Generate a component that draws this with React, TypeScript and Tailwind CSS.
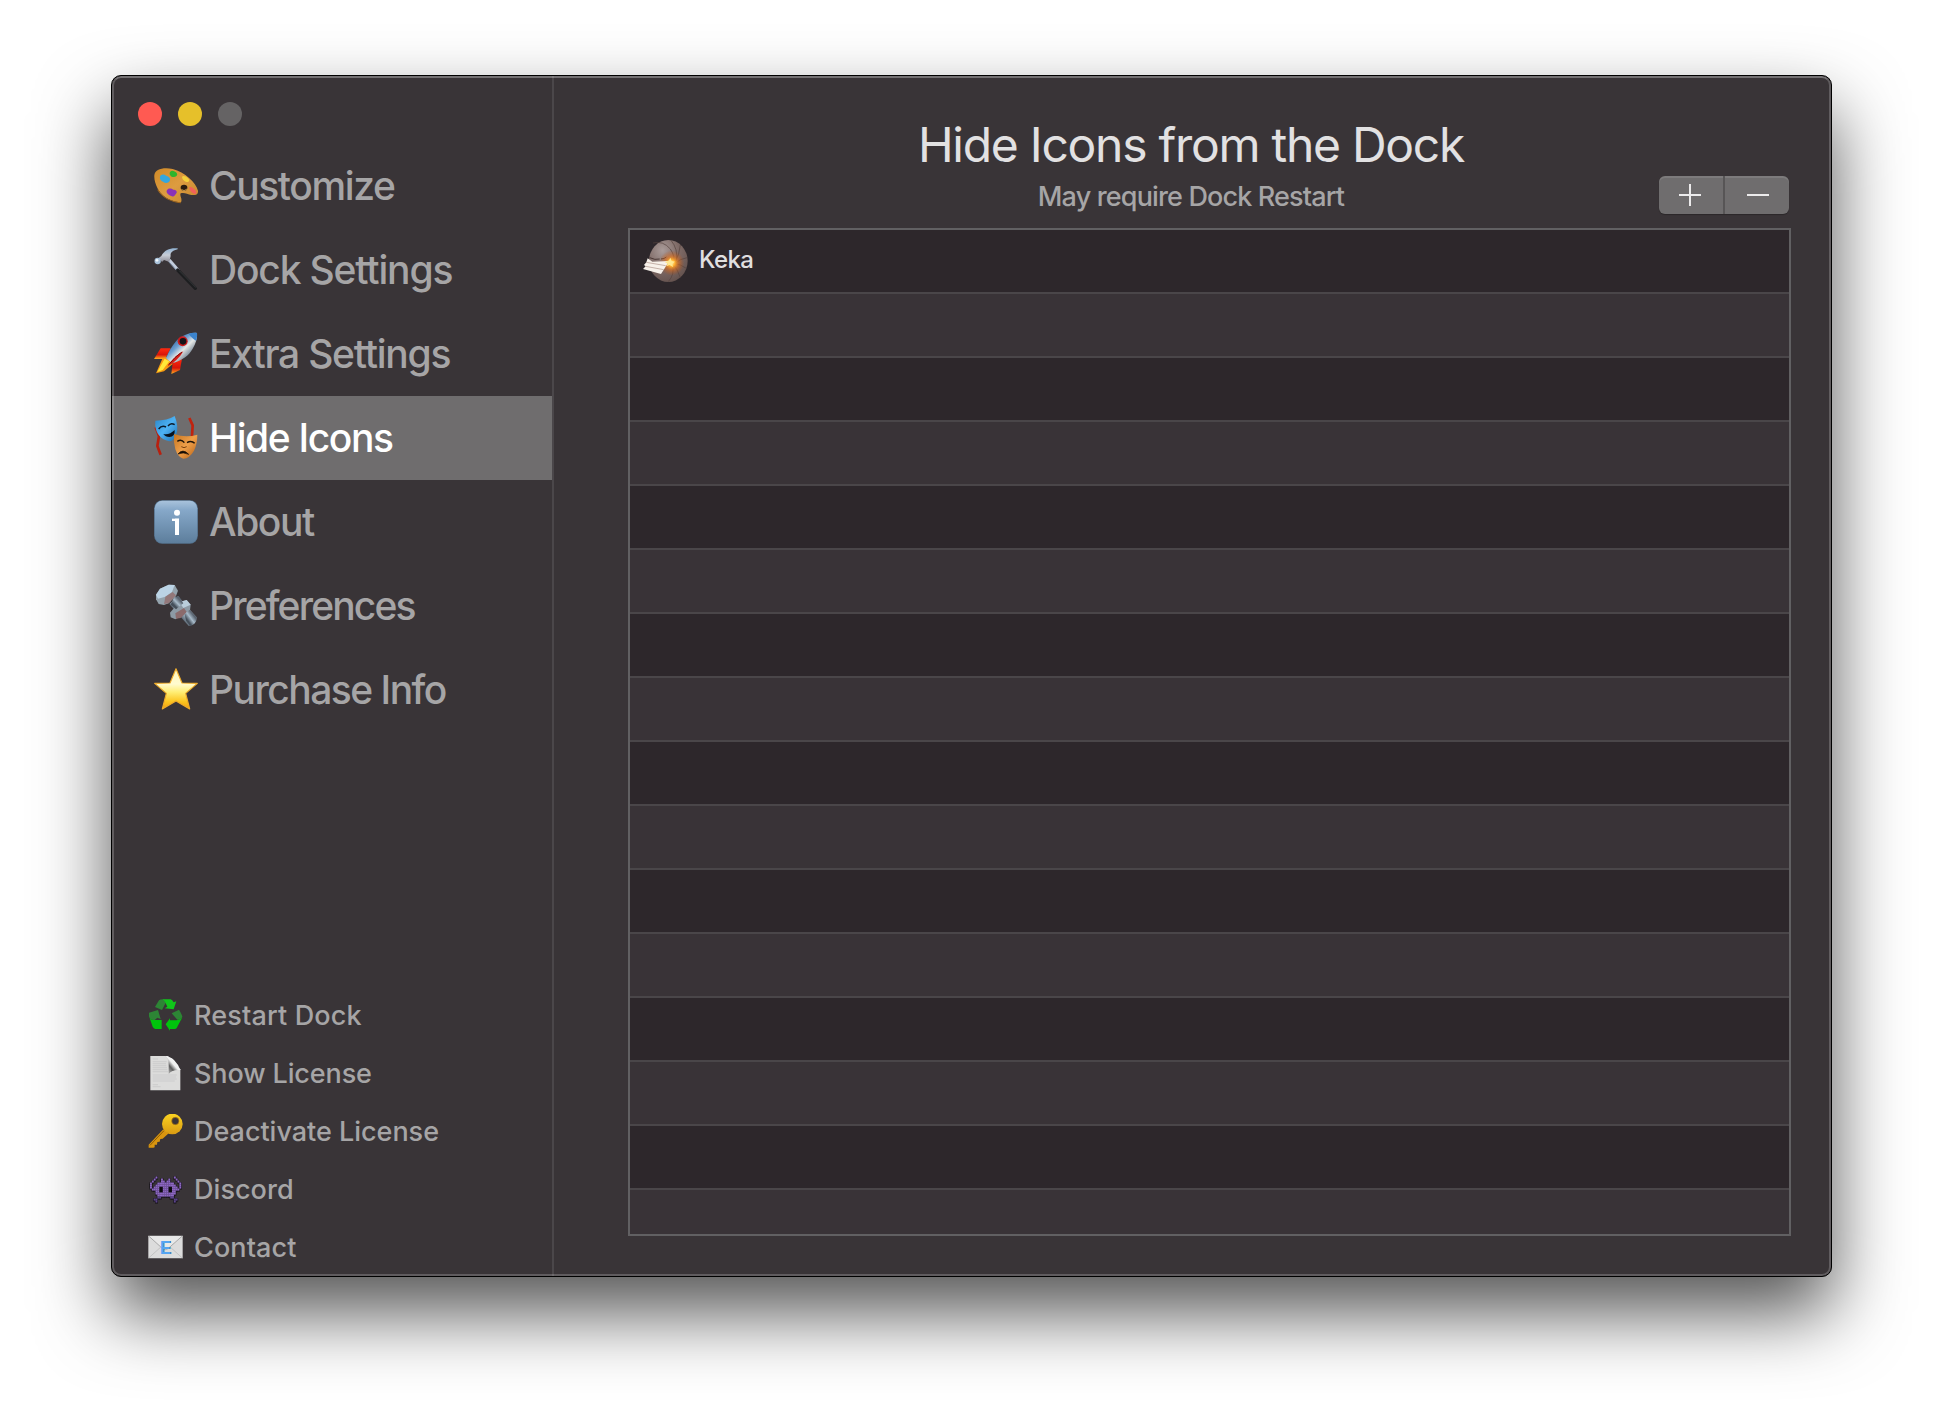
import React from "react";

function Palette() {
  return (
    <svg viewBox="0 0 132 132" className="size-[44px] shrink-0">
      <defs>
        <linearGradient id="pal" x1="0" y1="0" x2="1" y2="1">
          <stop offset="0" stopColor="#d08a28" />
          <stop offset="0.5" stopColor="#dd9c40" />
          <stop offset="1" stopColor="#c5862c" />
        </linearGradient>
      </defs>
      <path d="M1 34C2 16 28 9 56 15C92 24 126 56 132 80C133 92 126 94 112 93C100 90 90 84 80 88C76 96 86 102 81 115C60 114 28 104 12 76C4 60 0 46 1 34Z" fill="url(#pal)" />
      <path d="M12 76C28 104 60 114 81 115L80 118C54 114 26 104 10 78Z" fill="#a5681c" />
      <path d="M48 24c6-7 14-2 20 3c4 6 0 11-8 12c-8 1-16-6-12-15Z" fill="#2fb52b" />
      <path d="M18 38c2-9 14-8 20-2c7 2 13 8 9 15c-6 8-13 7-20 2c-6-3-11-8-9-15Z" fill="#35a7dd" />
      <path d="M84 38c6-4 12 0 17 4c6 5 6 10 1 12c-9 0-18-7-18-16Z" fill="#f3d13c" />
      <path d="M106 70c6-4 12 2 18 8c5 7 4 12-2 12c-8-2-16-10-16-20Z" fill="#f1615a" />
      <path d="M38 80c4-9 14-7 20-3c7 0 12 5 10 9c-4 6-8 14-14 11c-7-3-18-8-16-17Z" fill="#8a32b8" />
      <ellipse cx="90" cy="71" rx="10" ry="8.500" fill="#2a1c10" />
      <path d="M82 76q8 8 17-1" stroke="#e9b45f" strokeWidth="2" fill="none" />
    </svg>
  );
}

function Hammer() {
  return (
    <svg viewBox="0 0 132 132" className="size-[44px] shrink-0">
      <defs>
        <linearGradient id="ham" x1="0" y1="0" x2="0" y2="1">
          <stop offset="0" stopColor="#8fb0d0" />
          <stop offset="0.5" stopColor="#c8cdd6" />
          <stop offset="1" stopColor="#8d8b95" />
        </linearGradient>
      </defs>
      <path d="M46 36L74 68" stroke="#c3cddd" strokeWidth="9" />
      <path d="M43 40L70 70" stroke="#7c8da5" strokeWidth="3" />
      <path d="M71 66L124 121" stroke="#1d1e20" strokeWidth="10" strokeLinecap="round" />
      <path d="M76 68L126 119" stroke="#3b3d40" strokeWidth="2.500" />
      <path d="M71 1C50 -1 32 4 22 24L14 30L24 42L30 36L46 42L50 24C48 14 56 8 71 4Z" fill="url(#ham)" />
      <circle cx="11" cy="39" r="9.500" fill="#a9c2da" />
      <circle cx="9" cy="37" r="4" fill="#f3f8fc" />
    </svg>
  );
}

function Rocket() {
  return (
    <svg viewBox="0 0 132 132" className="size-[44px] shrink-0">
      <defs>
        <linearGradient id="rkt" x1="0.200" y1="0.200" x2="0.800" y2="0.800">
          <stop offset="0" stopColor="#2c5f9e" />
          <stop offset="0.350" stopColor="#6d9fd0" />
          <stop offset="0.600" stopColor="#e6e8e6" />
          <stop offset="1" stopColor="#5d6f84" />
        </linearGradient>
        <linearGradient id="fin" x1="0" y1="0" x2="0" y2="1">
          <stop offset="0" stopColor="#ff2a10" />
          <stop offset="0.600" stopColor="#d81408" />
          <stop offset="1" stopColor="#ffb020" />
        </linearGradient>
      </defs>
      <path d="M50 49L20 49L0 81L34 81Z" fill="url(#fin)" />
      <path d="M56 94L84 80L78 114L52 126Z" fill="url(#fin)" />
      <path d="M26 78L6 124L30 118L56 96L48 74Z" fill="#f89a10" />
      <path d="M32 80L10 120L26 114L46 88Z" fill="#ffe83a" />
      <path d="M129 3C112 0 82 10 66 28C54 42 44 60 36 78C42 86 52 92 60 92C84 84 104 72 116 50C126 34 130 18 129 3Z" fill="url(#rkt)" />
      <path d="M129 3C122 1 112 2 104 6C110 14 118 22 126 26C129 18 130 10 129 3Z" fill="#3b83cc" />
      <path d="M88 58Q66 66 40 104Q72 86 88 58Z" fill="#d61d18" />
      <path d="M84 60Q62 74 44 98" stroke="#7b0d0d" strokeWidth="3" fill="none" />
      <circle cx="86" cy="28" r="15" fill="#ca1b1c" />
      <circle cx="87" cy="28" r="10" fill="#141418" />
    </svg>
  );
}

function Masks() {
  return (
    <svg viewBox="0 0 132 132" className="size-[44px] shrink-0">
      <defs>
        <linearGradient id="mb" x1="0" y1="0" x2="1" y2="1">
          <stop offset="0" stopColor="#2b86c8" />
          <stop offset="0.500" stopColor="#4db2f4" />
          <stop offset="1" stopColor="#1f6dac" />
        </linearGradient>
        <linearGradient id="mo" x1="0" y1="0" x2="1" y2="1">
          <stop offset="0" stopColor="#c4731f" />
          <stop offset="0.500" stopColor="#f0a04a" />
          <stop offset="1" stopColor="#b35f14" />
        </linearGradient>
      </defs>
      <path d="M5 34L15 60L10 90L20 116" stroke="#b8200f" strokeWidth="8" fill="none" strokeLinejoin="round" />
      <path d="M106 6L116 28L114 60" stroke="#c0230f" strokeWidth="8" fill="none" strokeLinejoin="round" />
      <path d="M4 14Q40 14 62 0Q76 34 66 58Q58 76 46 76Q24 72 12 54Q2 38 4 14Z" fill="url(#mb)" />
      <path d="M14 39Q23 27 36 33M42 30Q50 19 62 26" stroke="#0b1a2a" strokeWidth="4.500" fill="none" />
      <path d="M28 54Q46 58 62 42Q64 62 46 63Q34 63 28 54Z" fill="#08131f" />
      <path d="M60 54Q94 66 130 56Q130 84 120 104Q106 128 88 128Q72 124 64 100Q58 80 60 54Z" fill="url(#mo)" />
      <path d="M70 76Q82 68 91 80M99 80Q112 72 122 82" stroke="#1d1208" strokeWidth="4.500" fill="none" />
      <path d="M72 114Q86 96 104 115Q88 107 72 114Z" fill="#150c05" stroke="#150c05" strokeWidth="2" />
      <path d="M82 92Q90 98 98 92" stroke="#7a3f0d" strokeWidth="3" fill="none" />
    </svg>
  );
}

function InfoBadge() {
  return (
    <svg viewBox="0 0 132 132" className="size-[44px] shrink-0">
      <defs>
        <linearGradient id="inf" x1="0" y1="0" x2="0" y2="1">
          <stop offset="0" stopColor="#a9c3dc" />
          <stop offset="0.220" stopColor="#86a8c9" />
          <stop offset="1" stopColor="#5d7e9c" />
        </linearGradient>
      </defs>
      <rect x="0.500" y="0.500" width="131" height="131" rx="24" fill="#547390" />
      <rect x="2" y="2" width="128" height="127" rx="23" fill="url(#inf)" />
      <circle cx="69" cy="38" r="9" fill="#fff" />
      <rect x="54" y="56" width="21" height="7" fill="#fff" />
      <rect x="63" y="56" width="12" height="49" fill="#fff" />
    </svg>
  );
}

function Bolt() {
  return (
    <svg viewBox="0 0 132 132" className="size-[44px] shrink-0">
      <defs>
        <linearGradient id="shaft" x1="0" y1="1" x2="1" y2="0">
          <stop offset="0.300" stopColor="#454f5a" />
          <stop offset="0.500" stopColor="#a9bccb" />
          <stop offset="0.700" stopColor="#59636f" />
        </linearGradient>
      </defs>
      <path d="M46 60L72 36L128 100Q128 122 104 126Z" fill="url(#shaft)" />
      <path d="M76 54L98 48L110 62L108 78L90 92L64 106L50 100L48 86Z" fill="#8d9aa5" />
      <path d="M76 54L98 48L110 62L88 72Z" fill="#b9cddb" />
      <path d="M64 88L90 72L98 84L80 102L66 104Z" fill="#8b6b6c" />
      <path d="M92 90L106 78L128 100Q128 120 108 126L96 110Z" fill="url(#shaft)" />
      <path d="M60 40L74 36L88 58L66 76L50 62Z" fill="url(#shaft)" />
      <path d="M6 32L18 14L44 2L62 3L72 20L66 36L44 58L30 63L14 60L6 46Z" fill="#94a3ad" />
      <path d="M6 32L18 14L44 2L62 3L54 24L34 38L12 44Z" fill="#bcd4e6" />
      <path d="M34 38L56 24L66 34L44 58L30 60Z" fill="#93787a" />
    </svg>
  );
}

function Star() {
  return (
    <svg viewBox="0 0 132 132" className="size-[44px] shrink-0">
      <defs>
        <linearGradient id="st" x1="0" y1="0" x2="0" y2="1">
          <stop offset="0" stopColor="#fff8b8" />
          <stop offset="0.380" stopColor="#fffbd0" />
          <stop offset="0.580" stopColor="#ffee74" />
          <stop offset="0.820" stopColor="#fbc41e" />
          <stop offset="1" stopColor="#f0a010" />
        </linearGradient>
      </defs>
      <path d="M66 2L84 45L130 46L95 76L107 123L66 99L25 123L37 76L2 46L48 45Z" fill="url(#st)" stroke="#eeab2a" strokeWidth="3.500" strokeLinejoin="round" />
    </svg>
  );
}

function Recycle() {
  return (
    <svg viewBox="0 0 105 105" className="-mt-[2px] size-[35px] shrink-0">
      <path d="M21 27L33 7Q36 4 46 4L56 9L42 36Z" fill="#2d8535" />
      <path d="M44 4H68Q73 5 77 13L85 10L77 34L50 31L58 26L50 9Z" fill="#10c51a" />
      <path d="M3 44L30 36L38 63L28 59L20 66Q6 68 3 55Z" fill="#2d8535" />
      <path d="M5 60Q10 67 16 66H41V93H22Q17 92 14 86Z" fill="#00c40c" />
      <path d="M71 46L93 35Q102 50 103 56Q100 64 88 65Z" fill="#2d8535" />
      <path d="M103 58L86 90Q84 93 80 93H66V98L53 79L66 61V67H86Q98 66 103 58Z" fill="#00c40c" />
    </svg>
  );
}

function Page() {
  return (
    <svg viewBox="0 0 105 105" className="-mt-px size-[35px] shrink-0">
      <defs>
        <linearGradient id="fold" x1="1" y1="0" x2="0" y2="1">
          <stop offset="0" stopColor="#ffffff" />
          <stop offset="0.450" stopColor="#f0f0f0" />
          <stop offset="0.620" stopColor="#5e5e5e" />
          <stop offset="0.800" stopColor="#9a9a9a" />
          <stop offset="1" stopColor="#dcdcdb" />
        </linearGradient>
      </defs>
      <path d="M7 0H60L97 40V103H7Z" fill="#dcdcdb" />
      <path d="M14 9H30M14 17H56M14 23H54M14 29H55M14 35H57M14 41H58M14 47H60M14 57H86M14 63H84M14 69H86M14 75H80M14 86H30M14 92H38" stroke="#c6c6c6" strokeWidth="2" />
      <path d="M50 0Q62 4 62 24V54Q72 40 97 42Q92 26 78 12Q66 1 50 0Z" fill="url(#fold)" />
    </svg>
  );
}

function Key() {
  return (
    <svg viewBox="0 0 105 105" className="-mt-px size-[35px] shrink-0">
      <defs>
        <linearGradient id="ky" x1="0" y1="0" x2="0" y2="1">
          <stop offset="0" stopColor="#fbd321" />
          <stop offset="1" stopColor="#d99a12" />
        </linearGradient>
      </defs>
      <path d="M46 46L2 92L2 101H16L20 100L20 92L27 92L28 84L35 83L37 75L44 74L62 58Z" fill="#d8950f" />
      <path d="M48 50L6 94" stroke="#8d5c08" strokeWidth="3" />
      <circle cx="73" cy="30" r="31" fill="url(#ky)" />
      <circle cx="82" cy="21" r="11" fill="#3a3437" stroke="#b97f0e" strokeWidth="2" />
    </svg>
  );
}

const alienRows = [
  "...#.........#...",
  "..#...#...#...#..",
  ".#....##.##....#.",
  "#...#########...#",
  "#..###########..#",
  "#.###..###..###.#",
  ".####..###..####.",
  "...##..###..##...",
  "...###########...",
  "....#########....",
  "....##.....##....",
  "..##.........##..",
  "...#.........#...",
];

const alienCells = alienRows.flatMap((row, y) =>
  row.split("").flatMap((c, x) => (c === "#" ? [{ x, y }] : []))
);

function Alien() {
  return (
    <svg viewBox="0 0 105 105" className="-mt-px size-[35px] shrink-0">
      <rect x="32" y="38" width="42" height="24" fill="#0d0a10" />
      {alienCells.map((c) => (
        <rect key={`s${c.x}-${c.y}`} x={4.5 + c.x * 5.5} y={13 + c.y * 6} width="9" height="9.500" fill="#120e16" />
      ))}
      {alienCells.map((c) => (
        <rect key={`${c.x}-${c.y}`} x={6 + c.x * 5.5} y={13.5 + c.y * 6} width="5.800" height="6.300" fill={c.y > 9 ? "#5d468c" : "#8d68c4"} />
      ))}
    </svg>
  );
}

function Envelope() {
  return (
    <svg viewBox="0 0 105 105" className="-mt-px size-[35px] shrink-0">
      <rect x="1" y="17" width="103" height="68" rx="2" fill="#dcdcdc" />
      <path d="M2 84L42 48M103 84L63 48" stroke="#bdbdbd" strokeWidth="2.500" />
      <path d="M2 18L44 56Q52 62 60 56L103 18" stroke="#a9a9a9" strokeWidth="3" fill="#e8e8e8" />
      <text x="38" y="73" fontFamily="Liberation Sans" fontWeight="700" fontSize="57" textLength="33" lengthAdjust="spacingAndGlyphs" fill="#2f6fb0">E</text>
      <text x="36" y="71" fontFamily="Liberation Sans" fontWeight="700" fontSize="57" textLength="33" lengthAdjust="spacingAndGlyphs" fill="#55a5f2">E</text>
    </svg>
  );
}

function KekaIcon() {
  return (
    <svg viewBox="0 0 135 132" className="h-[44px] w-[45px] shrink-0">
      <defs>
        <radialGradient id="kb" cx="0.350" cy="0.250" r="0.800">
          <stop offset="0" stopColor="#aa9c9a" />
          <stop offset="0.500" stopColor="#806c68" />
          <stop offset="1" stopColor="#64524e" />
        </radialGradient>
        <radialGradient id="kg">
          <stop offset="0" stopColor="#fff0a0" />
          <stop offset="0.250" stopColor="#ffb030" />
          <stop offset="0.550" stopColor="#e0701c" stopOpacity="0.600" />
          <stop offset="1" stopColor="#c05010" stopOpacity="0" />
        </radialGradient>
      </defs>
      <ellipse cx="76" cy="66" rx="58" ry="63" fill="url(#kb)" />
      <path d="M30 12Q60 4 82 30Q96 50 94 76M84 4Q106 30 100 66M112 18Q108 50 98 66M132 56Q110 60 98 72M130 88Q110 74 94 74M112 116Q104 90 90 76M76 128Q96 106 88 78" stroke="#54423e" strokeWidth="2" fill="none" />
      <path d="M20 56Q36 64 50 60M54 60Q64 60 70 54" stroke="#4a3835" strokeWidth="3" fill="none" />
      <circle cx="86" cy="72" r="38" fill="url(#kg)" />
      <path d="M14 58L28 68L78 66L66 86L54 105L0 90L8 82L3 78L10 70Z" fill="#f7f1ea" />
      <path d="M8 82L62 92M10 70L68 80" stroke="#b9a49a" strokeWidth="2.500" />
      <path d="M66 70L78 64L82 56L86 66L96 68L88 74L90 84L80 78L70 82L74 74Z" fill="#ffe890" />
    </svg>
  );
}

const mainItems = [
  { label: "Customize", Icon: Palette, track: "tracking-[-1.4px]" },
  { label: "Dock Settings", Icon: Hammer, track: "tracking-[-1.17px]" },
  { label: "Extra Settings", Icon: Rocket, track: "tracking-[-1.25px]" },
  { label: "Hide Icons", Icon: Masks, track: "tracking-[-1.38px]", active: true },
  { label: "About", Icon: InfoBadge, track: "tracking-[-1.45px]" },
  { label: "Preferences", Icon: Bolt, track: "tracking-[-1.85px]" },
  { label: "Purchase Info", Icon: Star, track: "tracking-[-1.52px]" },
];

const footerItems = [
  { label: "Restart Dock", Icon: Recycle, track: "tracking-[0.15px]" },
  { label: "Show License", Icon: Page, track: "tracking-[-0.12px]" },
  { label: "Deactivate License", Icon: Key, track: "tracking-[-0.02px]" },
  { label: "Discord", Icon: Alien, track: "tracking-[0.05px]" },
  { label: "Contact", Icon: Envelope, track: "tracking-[0.1px]" },
];

const rows = Array.from({ length: 16 }, (_, i) => i);

export default function App() {
  return (
    <div className="h-[1424px] w-[1943px] overflow-hidden bg-white pl-[111px] pt-[75px] font-[Inter,sans-serif]">
      <div className="relative flex h-[1202px] w-[1721px] overflow-hidden rounded-[10px] border border-black bg-[#393437] shadow-[0_36px_72px_rgba(0,0,0,0.67)]">
        <aside className="flex w-[442px] shrink-0 flex-col border-r-2 border-[#4b474a]">
          <div className="flex gap-4 pl-[26px] pt-[26px]">
            <span className="size-6 rounded-full bg-[#ff5a52]" />
            <span className="size-6 rounded-full bg-[#e6c02a]" />
            <span className="size-6 rounded-full bg-[#656364]" />
          </div>
          <nav className="mt-[18px]">
            {mainItems.map(({ label, Icon, track, active }) => (
              <div key={label} className={`flex h-[84px] items-center gap-[11px] pl-[42px] text-[39px] leading-none [font-weight:450] ${active ? "bg-[#6f6d6e] text-white" : "text-[#a6a5a6]"}`}>
                <Icon />
                <span className={`-mt-px whitespace-nowrap ${track}`}>{label}</span>
              </div>
            ))}
          </nav>
          <nav className="mt-[255px]">
            {footerItems.map(({ label, Icon, track }) => (
              <div key={label} className="flex h-[58px] items-center gap-[11px] pl-[36px] text-[27px] leading-none text-[#a6a5a6] [font-weight:450]">
                <Icon />
                <span className={`-mt-px whitespace-nowrap ${track}`}>{label}</span>
              </div>
            ))}
          </nav>
        </aside>
        <main className="flex flex-1 flex-col pl-[74px]">
          <div className="flex h-[152px]">
            <div className="flex w-[1031px] shrink-0 flex-col items-center pl-[95px] pt-[39px]">
              <h1 className="text-[48px] leading-[60px] tracking-[-1.27px] whitespace-nowrap text-[#e2e1e2] [font-weight:430]">Hide Icons from the Dock</h1>
              <p className="mt-[2px] text-[27px] leading-[40px] tracking-[-0.85px] whitespace-nowrap text-[#a6a5a6] [font-weight:450]">May require Dock Restart</p>
            </div>
            <div className="mt-[100px] flex h-[38px] w-[130px] shrink-0 rounded-[6px] bg-[#6f6d6e] shadow-[inset_0_2px_0_rgba(255,255,255,0.1),0_1px_1px_rgba(0,0,0,0.25)]">
              <button aria-label="Add" className="flex flex-1 items-center justify-center border-r-2 border-[#575556] pr-[2px]">
                <svg viewBox="0 0 22 22" className="size-[22px]">
                  <path d="M0 11H22M11 0V22" stroke="#ecebec" strokeWidth="2" />
                </svg>
              </button>
              <button aria-label="Remove" className="flex flex-1 items-center justify-center pl-[2px]">
                <svg viewBox="0 0 22 22" className="size-[22px]">
                  <path d="M0 11H22" stroke="#ecebec" strokeWidth="2" />
                </svg>
              </button>
            </div>
          </div>
          <div className="flex h-[1008px] w-[1163px] flex-col overflow-hidden border-2 border-[#616062]">
            {rows.map((i) => (
              <div key={i} className={`flex h-16 shrink-0 items-center border-b-2 border-[#4a4649] pl-[13px] ${i % 2 ? "bg-[#393337]" : "bg-[#2d272b]"}`}>
                {i === 0 && (
                  <>
                    <KekaIcon />
                    <span className="-mt-[3px] ml-[11px] text-[24px] font-medium tracking-[-0.6px] text-[#e0dfe0]">Keka</span>
                  </>
                )}
              </div>
            ))}
          </div>
        </main>
        <div className="pointer-events-none absolute inset-0 rounded-[9px] border-2 border-white/20 border-t-white/30" />
      </div>
    </div>
  );
}
